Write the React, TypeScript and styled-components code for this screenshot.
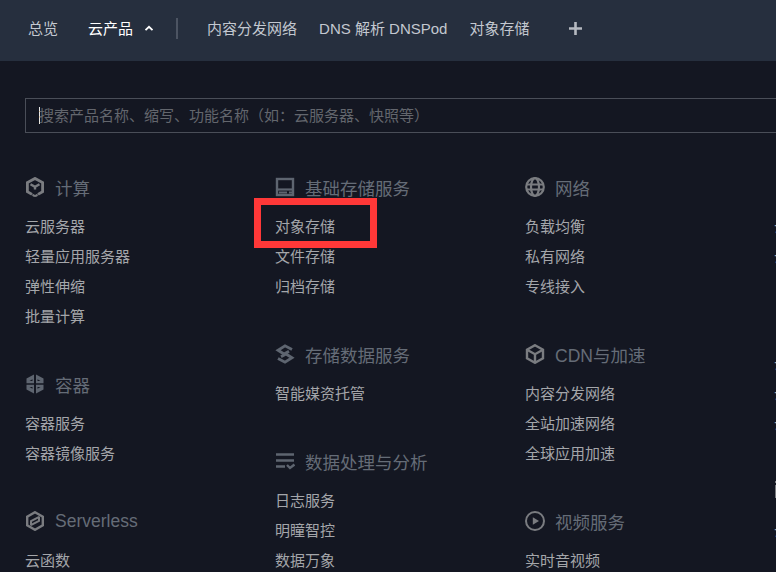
import React from "react";
import styled, { createGlobalStyle } from "styled-components";

const FONT = `"Liberation Sans", "Noto Sans CJK SC", sans-serif`;

const Global = createGlobalStyle`
  html, body { margin: 0; padding: 0; width: 776px; height: 572px; overflow: hidden; background: #141722; }
  body { font-family: ${FONT}; }
`;

const Page = styled.div`
  position: relative;
  width: 776px;
  height: 572px;
  overflow: hidden;
  background: #141722;
`;

const TopBar = styled.nav`
  display: flex;
  align-items: center;
  height: 61px;
  padding: 0 0 4px 28px;
  box-sizing: border-box;
  background: #262f3e;
`;

const NavItem = styled.span<{ $active?: boolean; $gap?: number }>`
  font-size: 15px;
  line-height: 22px;
  white-space: nowrap;
  color: ${(p) => (p.$active ? "#ffffff" : "#c3c8d0")};
  margin-right: ${(p) => p.$gap ?? 22}px;
`;

const Chevron = styled.svg`
  width: 10px;
  height: 7px;
  margin: 0 0 0 11px;
`;

const Divider = styled.span`
  width: 2px;
  height: 21px;
  margin: 0 29px 0 22px;
  background: #4c5462;
`;

const PlusIcon = styled.svg`
  width: 13px;
  height: 13px;
  margin-left: 18px;
`;

const Search = styled.div`
  display: flex;
  align-items: center;
  width: 800px;
  height: 35px;
  margin: 37px 0 0 25px;
  padding: 0 0 2px 13px;
  box-sizing: border-box;
  border: 1px solid #4a4e58;
  font-size: 15px;
  color: #63666d;
  white-space: nowrap;
`;

const Caret = styled.span`
  width: 1px;
  height: 17px;
  margin: 2px -1px 0 0;
  background: #e6e6e6;
`;

const Columns = styled.div`
  display: grid;
  grid-template-columns: repeat(4, 250px);
  margin: 40px 0 0 25px;
`;

const Column = styled.div`
  display: flex;
  flex-direction: column;
  gap: 38px;
`;

const Group = styled.section`
  display: flex;
  flex-direction: column;
`;

const Heading = styled.h3`
  display: flex;
  align-items: center;
  gap: 10px;
  height: 30px;
  margin: 0 0 9px;
  padding-bottom: 2px;
  box-sizing: border-box;
  font-size: 17.5px;
  font-weight: 400;
  color: #656c77;
  white-space: nowrap;
`;

const IconBox = styled.svg`
  flex: none;
  width: 20px;
  height: 20px;
`;

const Item = styled.a<{ $edge?: boolean }>`
  display: block;
  height: 30px;
  font-size: 15px;
  line-height: 30px;
  color: #a4a6aa;
  white-space: nowrap;
  margin-left: ${(p) => (p.$edge ? "-1px" : "0")};
`;

const Highlight = styled.div`
  position: absolute;
  left: 254px;
  top: 198px;
  width: 123px;
  height: 50px;
  box-sizing: border-box;
  border: 7px solid #ff3838;
`;

type IconName = "compute" | "storage" | "net" | "container" | "serverless" | "data" | "analysis" | "cdn" | "video" | "db" | "blank";

const GRAY = "#7a7c80";
const BLUE = "#5e6570";

const Icon = ({ name }: { name: IconName }) => {
  switch (name) {
    case "compute":
      return (
        <IconBox viewBox="0 0 20 20" fill="none" stroke={GRAY} strokeWidth="2.8">
          <path d="M7 17.4 2.4 14.6V5.6L10 1.4l7.6 4.2v9L13 17.4" />
          <path d="M5.5 7.2 10 9.8l4.500-2.600M10 10v2.500" strokeWidth="2.400" />
          <path d="M7.800 17.300a2.400 2.400 0 0 0 4.500 0" strokeWidth="2.200" />
        </IconBox>
      );
    case "storage":
      return (
        <IconBox viewBox="0 0 20 20" fill="none" stroke={BLUE}>
          <rect x="2" y="2" width="16" height="16" strokeWidth="2.400" />
          <path d="M3 12.500h14" strokeWidth="2.200" />
          <path d="M4 15.500h8M14 15.500h3" strokeWidth="2" />
        </IconBox>
      );
    case "net":
      return (
        <IconBox viewBox="0 0 20 20" fill="none" stroke={GRAY} strokeWidth="2.200">
          <circle cx="10" cy="10" r="8.800" />
          <ellipse cx="10" cy="10" rx="4" ry="8.800" />
          <path d="M1 7.400h18M1 12.600h18" strokeWidth="2" />
        </IconBox>
      );
    case "container":
      return (
        <IconBox viewBox="0 0 20 20" fill={BLUE}>
          <path d="M9 .5v8.800H1.500V4.500Z" />
          <path d="M11 .5v8.800h7.500V4.500Z" />
          <path d="M9 19.500v-8.800H1.500V15.500Z" />
          <path d="M11 19.500v-8.800h7.500V15.500Z" />
          <path d="M4.500 7 7.500 5.300V7ZM15.500 7 12.500 5.300V7ZM4.500 13 7.500 14.700V13ZM15.500 13 12.500 14.700V13Z" fill="#141722" />
        </IconBox>
      );
    case "serverless":
      return (
        <IconBox viewBox="0 0 20 20" fill="none" stroke={GRAY} strokeWidth="2.400">
          <path d="M10 1.200 17.800 5.600v8.800L10 18.800l-7.800-4.400V5.600Z" />
          <path d="M14.200 5.800 6 10.200v4.200M5.800 14.200 14 9.800V5.600" strokeWidth="2" />
        </IconBox>
      );
    case "data":
      return (
        <IconBox viewBox="0 0 20 20" fill="none" stroke={BLUE} strokeWidth="2.800">
          <path d="M17 5.600 10 1.800 3 6.200l6 3.800 5-2.800" />
          <path d="M3 14.400l7 3.800 7-4.400-6-3.800-5 2.800" />
        </IconBox>
      );
    case "analysis":
      return (
        <IconBox viewBox="0 0 20 20" fill="none" stroke={BLUE} strokeWidth="2.400">
          <path d="M1 3.500h18M1 9.500h18M1 15.500h9" />
          <path d="M12 14l3 3 4.500-3.500" />
        </IconBox>
      );
    case "cdn":
      return (
        <IconBox viewBox="0 0 20 20" fill="none" stroke={GRAY} strokeWidth="2.400">
          <path d="M10 1.200 18 5.700v8.600L10 18.800l-8-4.500V5.700Z" />
          <path d="M2.500 6 10 10.200 17.500 6M10 10.200v8" />
        </IconBox>
      );
    case "video":
      return (
        <IconBox viewBox="0 0 20 20" fill="none" stroke={GRAY} strokeWidth="2">
          <circle cx="10" cy="10" r="9" />
          <path d="M7.800 6.200 14 10l-6.200 3.800Z" fill={GRAY} stroke="none" />
        </IconBox>
      );
    case "db":
      return (
        <IconBox viewBox="0 0 20 20" fill={GRAY}>
          <rect x="0" y="0" width="20" height="2" />
          <rect x="0" y="4" width="20" height="13" />
        </IconBox>
      );
    default:
      return <IconBox viewBox="0 0 20 20" />;
  }
};

type GroupData = { icon: IconName; title: string; items: string[] };

const columns: GroupData[][] = [
  [
    { icon: "compute", title: "计算", items: ["云服务器", "轻量应用服务器", "弹性伸缩", "批量计算"] },
    { icon: "container", title: "容器", items: ["容器服务", "容器镜像服务"] },
    { icon: "serverless", title: "Serverless", items: ["云函数"] },
  ],
  [
    { icon: "storage", title: "基础存储服务", items: ["对象存储", "文件存储", "归档存储"] },
    { icon: "data", title: "存储数据服务", items: ["智能媒资托管"] },
    { icon: "analysis", title: "数据处理与分析", items: ["日志服务", "明瞳智控", "数据万象"] },
  ],
  [
    { icon: "net", title: "网络", items: ["负载均衡", "私有网络", "专线接入"] },
    { icon: "cdn", title: "CDN与加速", items: ["内容分发网络", "全站加速网络", "全球应用加速"] },
    { icon: "video", title: "视频服务", items: ["实时音视频"] },
  ],
  [
    { icon: "blank", title: "数据库", items: ["云数据库", "云数据库"] },
    { icon: "blank", title: "安全", items: ["云安全", "云安全", "云安全"] },
    { icon: "db", title: "大数据", items: ["云数据"] },
  ],
];

export default function App() {
  return (
    <Page>
      <Global />
      <TopBar>
        <NavItem $gap={30}>总览</NavItem>
        <NavItem $active $gap={0}>云产品</NavItem>
        <Chevron viewBox="0 0 10 7" fill="none" stroke="#ffffff" strokeWidth="1.8">
          <path d="M1.5 5.2 5 1.8l3.5 3.4" />
        </Chevron>
        <Divider />
        <NavItem>内容分发网络</NavItem>
        <NavItem>DNS 解析 DNSPod</NavItem>
        <NavItem $gap={22}>对象存储</NavItem>
        <PlusIcon viewBox="0 0 13 13" fill="#b5b9c0">
          <path d="M5.200 0h2.600v5.200H13v2.600H7.800V13H5.200V7.800H0V5.200h5.200Z" />
        </PlusIcon>
      </TopBar>
      <Search>
        <Caret />
        搜索产品名称、缩写、功能名称（如：云服务器、快照等）
      </Search>
      <Columns>
        {columns.map((col, i) => (
          <Column key={i}>
            {col.map((g, j) => (
              <Group key={j}>
                <Heading>
                  <Icon name={g.icon} />
                  {g.title}
                </Heading>
                {g.items.map((it, k) => (
                  <Item key={k} $edge={i === 3}>{it}</Item>
                ))}
              </Group>
            ))}
          </Column>
        ))}
      </Columns>
      <Highlight />
    </Page>
  );
}
